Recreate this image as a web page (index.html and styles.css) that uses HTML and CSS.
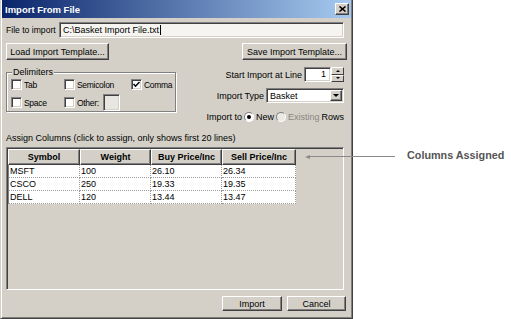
FILE: index.html
```html
<!DOCTYPE html>
<html lang="en">
<head>
    <meta charset="UTF-8">
    <title>Import From File</title>
    <link rel="stylesheet" href="styles.css">
</head>
<body>
    <div class="page">
        <div class="dialog">
            <div class="titlebar">
                <span class="title">Import From File</span>
                <span class="close-btn">
                    <svg width="7" height="6" viewBox="0 0 7 6"><path d="M0.5 0.5 L6.5 5.5 M6.5 0.5 L0.5 5.5" stroke="#000" stroke-width="1.6"/></svg>
                </span>
            </div>
            <div class="dialog-body">
                <div class="file-row">
                    <span class="file-label">File to import</span>
                    <div class="field file-field">C:\Basket Import File.txt<span class="caret"></span></div>
                </div>

                <div class="template-row">
                    <div class="btn load-btn">Load Import Template...</div>
                    <div class="btn save-btn">Save Import Template...</div>
                </div>

                <div class="options-row">
                    <div class="group">
                        <span class="legend">Delimiters</span>
                        <div class="check-grid">
                            <div class="check"><span class="box"></span>Tab</div>
                            <div class="check"><span class="box"></span>Semicolon</div>
                            <div class="check"><span class="box checked">
                                <svg width="7" height="7" viewBox="0 0 7 7"><path d="M0.5 3 L2.5 5.2 L6.5 1" fill="none" stroke="#000" stroke-width="1.5"/></svg>
                            </span>Comma</div>
                            <div class="check"><span class="box"></span>Space</div>
                            <div class="check"><span class="box"></span>Other:<span class="field other-field"></span></div>
                        </div>
                    </div>

                    <div class="options-right">
                        <div class="opt-line">
                            <span>Start Import at Line</span>
                            <div class="spinner">
                                <div class="field spin-field">1</div>
                                <div class="spin-btns">
                                    <span class="spin-btn"><i class="tri-up"></i></span>
                                    <span class="spin-btn"><i class="tri-down"></i></span>
                                </div>
                            </div>
                        </div>
                        <div class="opt-line type-line">
                            <span>Import Type</span>
                            <div class="field select-field">
                                <span>Basket</span>
                                <span class="drop-btn"><i class="tri-down"></i></span>
                            </div>
                        </div>
                        <div class="opt-line to-line">
                            <span>Import to</span>
                            <span class="radio selected"></span>
                            <span>New</span>
                            <span class="radio disabled"></span>
                            <span class="muted">Existing</span>
                            <span>Rows</span>
                        </div>
                    </div>
                </div>

                <div class="assign-label">Assign Columns (click to assign, only shows first 20 lines)</div>

                <div class="grid-box">
                    <table class="grid">
                        <thead>
                            <tr>
                                <th class="c1">Symbol</th>
                                <th class="c2">Weight</th>
                                <th class="c3">Buy Price/Inc</th>
                                <th class="c4">Sell Price/Inc</th>
                            </tr>
                        </thead>
                        <tbody>
                            <tr><td>MSFT</td><td>100</td><td>26.10</td><td>26.34</td></tr>
                            <tr><td>CSCO</td><td>250</td><td>19.33</td><td>19.35</td></tr>
                            <tr><td>DELL</td><td>120</td><td>13.44</td><td>13.47</td></tr>
                        </tbody>
                    </table>
                </div>

                <div class="footer">
                    <div class="btn import-btn">Import</div>
                    <div class="btn cancel-btn">Cancel</div>
                </div>
            </div>
        </div>

        <!-- callout pointing at the header row -->
        <div class="callout">
            <span class="arrow-head"></span>
            <span class="arrow-line"></span>
        </div>
        <div class="callout-text">Columns Assigned</div>
    </div>
</body>
</html>
```

FILE: styles.css
```css
* {
    margin: 0;
    padding: 0;
    box-sizing: border-box;
}

body {
    background: #fff;
    font-family: "Liberation Sans", Arial, sans-serif;
    font-size: 9px;
    color: #000;
    overflow: hidden;
}

.page {
    position: relative;
    width: 511px;
    height: 319px;
    display: flex;
}

/* Dialog frame */
.dialog {
    width: 353px;
    height: 319px;
    background: #d4d0c8;
    border: 1px solid;
    border-top: none;
    border-color: #d4d0c8 #404040 #404040 #d4d0c8;
    box-shadow: inset 1px 0 #fff, inset -1px -1px #808080;
    display: flex;
    flex-direction: column;
}

.titlebar {
    height: 18px;
    margin: 0 1px;
    background: linear-gradient(to right, #0a246a, #a6caf0);
    display: flex;
    align-items: center;
    justify-content: space-between;
    padding: 0 2px 0 3px;
}

.title {
    color: #fff;
    font-weight: bold;
    font-size: 9.5px;
}

.close-btn {
    width: 14px;
    height: 12px;
    background: #d4d0c8;
    border: 1px solid;
    border-color: #fff #404040 #404040 #fff;
    box-shadow: inset -1px -1px #808080;
    display: flex;
    align-items: center;
    justify-content: center;
}

.dialog-body {
    flex: 1;
    display: flex;
    flex-direction: column;
    padding: 4px 5px 0 5px;
}

/* Shared control looks */
.field {
    background: #fff;
    border: 1px solid;
    border-color: #808080 #fff #fff #808080;
    box-shadow: inset 1px 1px #404040, inset -1px -1px #d4d0c8;
}

.btn {
    height: 17px;
    background: #d4d0c8;
    border: 1px solid;
    border-color: #fff #404040 #404040 #fff;
    box-shadow: inset -1px -1px #808080;
    display: flex;
    align-items: center;
    justify-content: center;
}

/* File row */
.file-row {
    display: flex;
    align-items: center;
    height: 16px;
}

.file-label {
    width: 53px;
    font-size: 8.6px;
}

.file-field {
    width: 285px;
    height: 16px;
    background: #f5f4f0;
    padding: 0 3px;
    display: flex;
    align-items: center;
}

.caret {
    width: 1px;
    height: 10px;
    background: #000;
    margin-left: 1px;
}

.template-row {
    display: flex;
    justify-content: space-between;
    margin-top: 5px;
}

.load-btn {
    width: 103px;
}

.save-btn {
    width: 105px;
}

/* Delimiters and import options */
.options-row {
    display: flex;
    justify-content: space-between;
    margin-top: 6px;
}

.group {
    position: relative;
    width: 170px;
    height: 40px;
    margin-top: 6px;
    border: 1px solid #808080;
    box-shadow: inset 1px 1px #fff, 1px 1px #fff;
    padding: 6px 0 0 4px;
}

.legend {
    position: absolute;
    top: -6px;
    left: 5px;
    padding: 0 1px;
    background: #d4d0c8;
    line-height: 10px;
}

.check-grid {
    display: grid;
    grid-template-columns: 53px 67px 1fr;
    row-gap: 7px;
    font-size: 8.5px;
    letter-spacing: -0.3px;
}

.check {
    display: flex;
    align-items: center;
    height: 11px;
}

.box {
    width: 11px;
    height: 11px;
    margin-right: 2px;
    background: #fff;
    border: 1px solid;
    border-color: #808080 #fff #fff #808080;
    box-shadow: inset 1px 1px #404040, inset -1px -1px #d4d0c8;
    display: flex;
    align-items: center;
    justify-content: center;
}

.other-field {
    width: 17px;
    height: 17px;
    margin-left: 4px;
    background: #e8e6e1;
}

.options-right {
    display: flex;
    flex-direction: column;
    align-items: flex-end;
    margin-top: 1px;
    margin-right: 3px;
}

.opt-line {
    display: flex;
    align-items: center;
    gap: 2px;
    height: 15px;
}

.type-line {
    margin-top: 6px;
}

.to-line {
    margin-top: 8px;
    height: 11px;
}

.spinner {
    display: flex;
    height: 15px;
}

.spin-field {
    width: 27px;
    height: 15px;
    text-align: right;
    padding-right: 4px;
    line-height: 13px;
}

.spin-btns {
    width: 13px;
    display: flex;
    flex-direction: column;
}

.spin-btn {
    flex: 1;
    background: #d4d0c8;
    border: 1px solid;
    border-color: #fff #404040 #404040 #fff;
    display: flex;
    align-items: center;
    justify-content: center;
}

.tri-up {
    border-left: 2px solid transparent;
    border-right: 2px solid transparent;
    border-bottom: 2px solid #000;
}

.tri-down {
    border-left: 3px solid transparent;
    border-right: 3px solid transparent;
    border-top: 3px solid #000;
}

.spin-btn .tri-down {
    border-width: 2px 2px 0;
}

.select-field {
    width: 78px;
    height: 15px;
    display: flex;
    align-items: center;
    justify-content: space-between;
    padding: 1px 1px 1px 3px;
}

.drop-btn {
    width: 12px;
    height: 11px;
    background: #d4d0c8;
    border: 1px solid;
    border-color: #fff #404040 #404040 #fff;
    box-shadow: inset -1px -1px #808080;
    display: flex;
    align-items: center;
    justify-content: center;
}

.radio {
    position: relative;
    width: 10px;
    height: 10px;
    border-radius: 50%;
    background: #fff;
    border: 1px solid;
    border-color: #808080 #fff #fff #808080;
}

.radio.selected::after {
    content: "";
    position: absolute;
    left: 2px;
    top: 2px;
    width: 4px;
    height: 4px;
    border-radius: 50%;
    background: #000;
}

.radio.disabled {
    background: #ebe9e4;
}

.muted {
    color: #8a877f;
}

/* Column assignment grid */
.assign-label {
    margin-top: 11px;
    line-height: 11px;
}

.grid-box {
    width: 338px;
    height: 143px;
    margin-top: 3px;
    border: 1px solid;
    border-color: #808080 #fff #fff #808080;
    box-shadow: inset 1px 1px #404040, inset -1px -1px #d4d0c8;
    padding: 1px;
}

.grid {
    border-collapse: separate;
    border-spacing: 0;
    font-size: 9px;
}

.grid th {
    height: 16px;
    background: #d4d0c8;
    font-weight: bold;
    text-align: center;
    border: 1px solid;
    border-color: #fff #404040 #404040 #fff;
    box-shadow: inset -1px -1px #808080;
}

.grid .c1 { width: 72px; }
.grid .c2 { width: 71px; }
.grid .c3 { width: 71px; }
.grid .c4 { width: 74px; }

.grid td {
    height: 13px;
    background: #fff;
    padding: 0 1px;
    line-height: 12px;
    border-right: 1px dotted #9a9a9a;
    border-bottom: 1px dotted #9a9a9a;
}

.grid td:first-child {
    border-left: 1px solid #808080;
}

.footer {
    display: flex;
    justify-content: flex-end;
    gap: 5px;
    margin-top: 6px;
    padding-right: 1px;
}

.footer .btn {
    height: 15px;
}

.import-btn {
    width: 60px;
}

.cancel-btn {
    width: 59px;
}

/* Callout */
.callout {
    position: absolute;
    left: 305px;
    top: 154px;
    display: flex;
    align-items: center;
    height: 5px;
}

.arrow-head {
    border-top: 2px solid transparent;
    border-bottom: 2px solid transparent;
    border-right: 5px solid #8a8a8a;
}

.arrow-line {
    width: 85px;
    height: 1px;
    background: #8a8a8a;
}

.callout-text {
    position: absolute;
    left: 407px;
    top: 149px;
    font-weight: bold;
    font-size: 10.8px;
    color: #555;
}
```
